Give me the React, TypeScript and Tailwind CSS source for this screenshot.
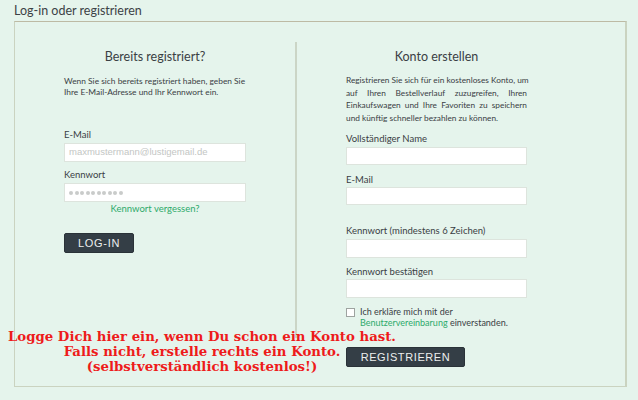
import React from 'react'

const body = { fontFamily: 'Lato, "Noto Sans", sans-serif' }
const arial = { fontFamily: '"Liberation Sans", Arial, sans-serif' }
const serif = { fontFamily: '"DejaVu Serif", "Liberation Serif", serif' }

function Field({ className = '', children }: { className?: string; children?: React.ReactNode }) {
  return (
    <div className={`bg-white border border-[#dde4dd] flex items-center px-[4px] ${className}`}>
      {children}
    </div>
  )
}

function Label({ text, className = '' }: { text: string; className?: string }) {
  return <div className={`text-[9.5px] leading-[12px] text-[#3a4044] ${className}`}>{text}</div>
}

// Blocksatz pro Zeile, letzte Zeile linksbündig
const introLines = [
  'Registrieren Sie sich für ein kostenloses Konto, um',
  'auf Ihren Bestellverlauf zuzugreifen, Ihren',
  'Einkaufswagen und Ihre Favoriten zu speichern',
]

export default function App() {
  return (
    <div className="relative w-[638px] h-[400px] overflow-hidden bg-[#e5f4ec] text-[#3a4044]" style={body}>
      <div className="pl-[14px] pt-[3px] h-[21px] text-[12.5px] leading-[15px] text-[#3c4246]">
        Log-in oder registrieren
      </div>

      <div className="ml-[14px] w-[613px] h-[366px] border border-[#cad3c0] border-t-[#bdbaa4] border-r-2 flex items-start">
        {/* Anmelden */}
        <div className="w-[280px] pl-[49px] pt-[27px]">
          <div className="w-[182px]">
            <h2 className="text-center text-[12.5px] leading-[16px] text-[#3a4044]">Bereits registriert?</h2>
            <p className="mt-[11px] text-[8.4px] leading-[11px] text-[#3a4044] whitespace-nowrap">
              Wenn Sie sich bereits registriert haben, geben Sie
              <br />
              Ihre E-Mail-Adresse und Ihr Kennwort ein.
            </p>

            <Label text="E-Mail" className="mt-[31px]" />
            <Field className="mt-[2px] h-[19px]">
              <span className="text-[9.5px] text-[#c3c6c4]" style={arial}>maxmustermann@lustigemail.de</span>
            </Field>

            <Label text="Kennwort" className="mt-[7px]" />
            <Field className="mt-[2px] h-[19px] gap-[1.5px]">
              {Array.from({ length: 10 }).map((_, i) => (
                <span key={i} className="w-[4px] h-[4px] rounded-full bg-[#c9cbca]" />
              ))}
            </Field>

            <div className="mt-[1px] text-center text-[9.5px] leading-[12px] text-[#2daa6b]">Kennwort vergessen?</div>

            <button
              className="mt-[18px] w-[70px] h-[20px] rounded-[2px] bg-[#343e46] border border-[#2a3238] text-[#eceeee] text-[11px] tracking-[0.7px]"
              style={arial}
            >
              LOG-IN
            </button>
          </div>
        </div>

        <div className="mt-[20px] w-[2px] h-[296px] bg-[#cbd5c6]" />

        {/* Registrieren */}
        <div className="flex-1 pl-[49px] pt-[27px]">
          <div className="w-[181px]">
            <h2 className="text-center text-[12.5px] leading-[16px] text-[#3a4044]">Konto erstellen</h2>
            <div className="mt-[9px] text-[8.3px] leading-[12.7px] text-[#3a4044]">
              {introLines.map(line => (
                <div key={line} className="text-justify [text-align-last:justify] whitespace-nowrap">
                  {line}
                </div>
              ))}
              <div>und künftig schneller bezahlen zu können.</div>
            </div>

            <Label text="Vollständiger Name" className="mt-[8px]" />
            <Field className="mt-[2px] h-[18px]" />

            <Label text="E-Mail" className="mt-[9px]" />
            <Field className="mt-[1px] h-[18px]" />

            <Label text="Kennwort (mindestens 6 Zeichen)" className="mt-[20px]" />
            <Field className="mt-[2px] h-[19px]" />

            <Label text="Kennwort bestätigen" className="mt-[8px]" />
            <Field className="mt-[1px] h-[19px]" />

            <div className="mt-[8px] flex items-start gap-[5px]">
              <span className="mt-[2px] w-[9px] h-[9px] shrink-0 bg-white border border-[#9ea3a0]" />
              <div className="text-[9px] leading-[11px] text-[#3a4044]">
                Ich erkläre mich mit der
                <br />
                <span className="text-[#2daa6b]">Benutzervereinbarung</span> einverstanden.
              </div>
            </div>

            <button
              className="mt-[19px] w-[119px] h-[20px] rounded-[2px] bg-[#343e46] border border-[#2a3238] text-[#eceeee] text-[11px] tracking-[0.6px]"
              style={arial}
            >
              REGISTRIEREN
            </button>
          </div>
        </div>
      </div>

      {/* Hinweis */}
      <div
        className="absolute left-0 top-[329px] w-[404px] text-center text-[13.3px] leading-[15px] font-bold text-[#ee1b1b]"
        style={serif}
      >
        Logge Dich hier ein, wenn Du schon ein Konto hast.
        <br />
        Falls nicht, erstelle rechts ein Konto.
        <br />
        (selbstverständlich kostenlos!)
      </div>
    </div>
  )
}
